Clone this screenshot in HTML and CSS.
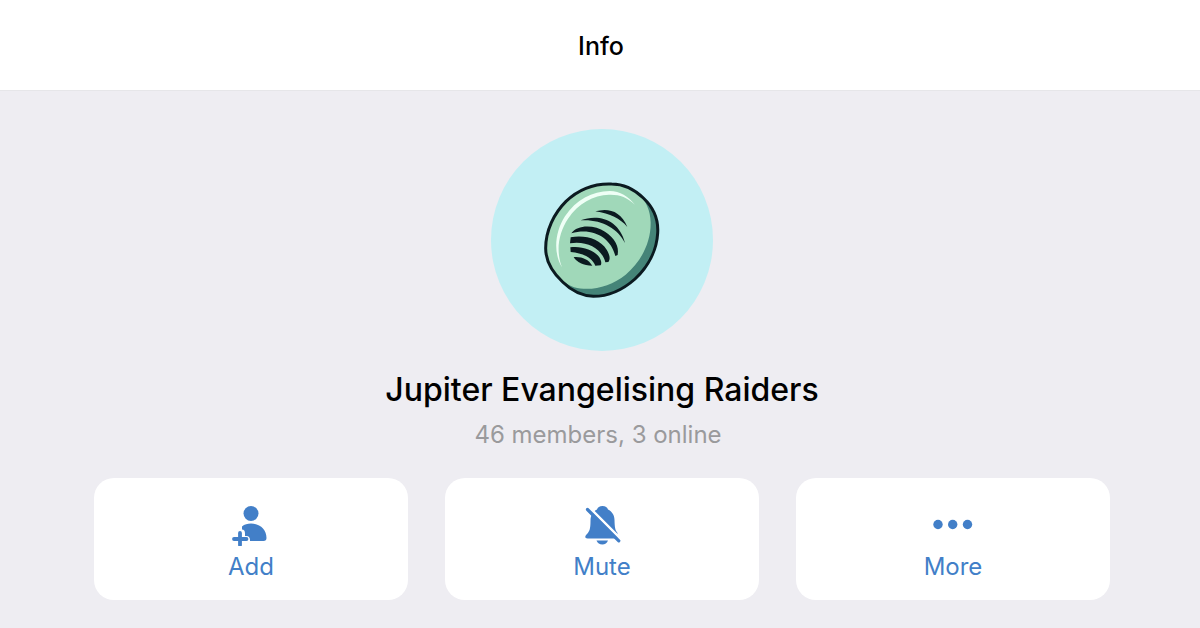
FILE: index.html
```
<!DOCTYPE html>
<html lang="en">
<head>
<meta charset="utf-8">
<meta name="viewport" content="width=device-width, initial-scale=1">
<title>Info</title>
<link rel="stylesheet" href="styles.css">
</head>
<body>
<header class="topbar"><h1 class="topbar-title">Info</h1></header>
<main class="profile">
  <svg class="avatar" viewBox="0 0 222 222" role="img" aria-label="Group photo">
    <defs>
      <path id="rim" d="M245 42C285 42 315 60 340 84C370 112 386 148 383 190C380 240 355 290 315 327C278 360 235 379 190 379C150 377 122 360 98 336C65 305 47 275 47 235C47 181 72 130 108 94C146 58 195 40 245 42Z"/>
    </defs>
    <circle cx="111" cy="111" r="111" fill="#c2eff4"/>
    <g transform="translate(39 41) scale(.33333)">
      <use href="#rim" fill="#458478"/>
      <path d="M249 43C310 44 361 88 362 157C363 219 333 275 287 314C242 350 184 365 132 352C85 334 48 290 48 235C48 125 138 41 249 43Z" fill="#a0d8b9"/>
      <use href="#rim" fill="none" stroke="#0b1a20" stroke-width="9"/>
      <path d="M96 292C68 246 76 184 105 139C138 88 187 64 239 63C271 63 294 79 315 104C290 81 269 73 237 74C190 76 145 99 114 146C85 191 77 243 96 292Z" fill="#effff6"/>
      <g transform="translate(105 99)" fill="#0b1a20">
        <path d="M91 25C127 14 168 22 187 72C165 46 136 32 91 25Z"/>
        <path d="M47 52C100 32 163 50 180 120C158 75 108 48 47 52Z"/>
        <path d="M19 91C38 63 90 66 120 86C150 106 163 130 158 156L151 159C138 102 80 72 19 91Z"/>
        <path d="M15 121L17 103C60 95 105 108 125 140C137 160 135 170 130 177L121 178C112 138 66 112 15 121Z"/>
        <path d="M17 147L16 133C50 128 88 142 103 163C110 175 110 183 107 187L91 188C82 165 55 150 17 147Z"/>
        <path d="M26 162C50 160 70 168 82 188C55 188 35 178 26 162Z"/>
      </g>
    </g>
  </svg>
  <h2 class="name">Jupiter Evangelising Raiders</h2>
  <p class="status">46 members, 3 online</p>
  <div class="actions">
    <button class="action" type="button">
      <svg class="icon" viewBox="0 0 44 44" aria-hidden="true">
        <circle cx="22" cy="11.500" r="7.500" fill="currentColor"/>
        <path d="M13 24.500C15.500 22.300 18.500 21.500 22 21.500C31 21.500 37.500 27.500 37.500 36Q37.500 39 34.500 39H21V38C21 36 20 34 17.500 34H16V31.500C16 29 15 27.500 13 27.500Z" fill="currentColor"/>
        <path d="M11 31V43M5 37H17.500" fill="none" stroke="currentColor" stroke-width="3.800" stroke-linecap="round"/>
      </svg>
      <span>Add</span>
    </button>
    <button class="action" type="button">
      <svg class="icon" viewBox="0 0 44 44" aria-hidden="true">
        <path d="M22.500 4C25.500 4 27.300 5.500 28 7.500C32 9.500 34.500 13 34.500 18C34.700 25 35 28 37.500 31V36.500H7.500C5 36.500 4.500 34.500 6.500 32.500C9.500 29.500 10.500 27 10.500 19C10.500 13 13 9.500 17 7.500C17.700 5.500 19.500 4 22.500 4Z" fill="currentColor"/>
        <path d="M16.500 38.500H28C27 41 25 42.500 22.300 42.500S17.500 41 16.500 38.500Z" fill="currentColor"/>
        <path d="M8 4.300L41.500 37.800" stroke="#fff" stroke-width="2.800"/>
        <path d="M7.500 7.500L38.800 38.800" stroke="currentColor" stroke-width="3.200" stroke-linecap="round"/>
      </svg>
      <span>Mute</span>
    </button>
    <button class="action" type="button">
      <svg class="icon" viewBox="0 0 44 44" aria-hidden="true">
        <g fill="currentColor"><circle cx="7" cy="22.500" r="4.700"/><circle cx="21.700" cy="22.500" r="4.700"/><circle cx="36.500" cy="22.500" r="4.700"/></g>
      </svg>
      <span>More</span>
    </button>
  </div>
</main>
</body>
</html>
```
FILE: styles.css
```
* { box-sizing: border-box; }
body {
  margin: 0;
  background: #eeedf2;
  color: #000;
  font-family: Inter, "Liberation Sans", sans-serif;
}
.topbar {
  display: flex;
  justify-content: center;
  padding: 30px 0 28px 2px;
  background: #fff;
  border-bottom: 1px solid #e6e6e9;
}
.topbar-title {
  margin: 0;
  font-size: 25px;
  line-height: 32px;
  font-weight: 500;
}
.profile {
  display: flex;
  flex-direction: column;
  align-items: center;
  padding: 38px 90px 28px 94px;
}
.avatar { display: block; width: 222px; height: 222px; }
.name {
  margin: 19px 0 0;
  font-size: 32px;
  line-height: 40px;
  font-weight: 500;
  text-align: center;
}
.status {
  margin: 9px 0 0;
  padding-right: 8px;
  color: #9a9a9c;
  font-size: 24px;
  line-height: 32px;
}
.actions {
  display: grid;
  grid-template-columns: repeat(3, 1fr);
  gap: 37px;
  width: 100%;
  margin-top: 27px;
}
.action {
  display: flex;
  flex-direction: column;
  align-items: center;
  padding: 24px 0 17px;
  border: 0;
  border-radius: 20px;
  background: #fff;
  color: #427fc8;
  font: 400 24px/32px Inter, "Liberation Sans", sans-serif;
  cursor: pointer;
}
.icon { display: block; width: 44px; height: 44px; margin-bottom: 5px; }
```
